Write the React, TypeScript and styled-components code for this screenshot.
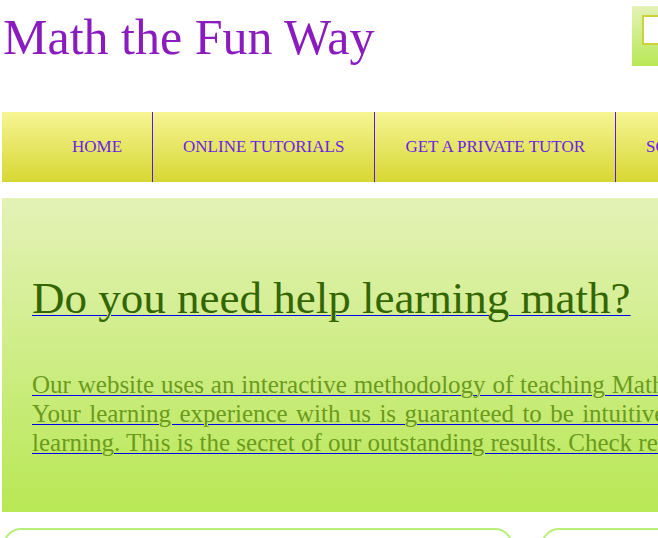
import React from "react";
import styled, { createGlobalStyle } from "styled-components";

const Global = createGlobalStyle`
  html, body {
    margin: 0;
    padding: 0;
    overflow: hidden;
    background: #ffffff;
  }
  body {
    font-family: "Liberation Serif", "Times New Roman", serif;
  }
`;

const Viewport = styled.div`
  width: 100%;
  overflow: hidden;
`;

const Page = styled.div`
  width: 951px;
  padding-left: 2px;
`;

const Header = styled.header`
  display: flex;
  justify-content: space-between;
  align-items: flex-start;
  height: 112px;
`;

const Title = styled.h1`
  margin: 8px 0 0 1px;
  font-size: 50px;
  font-weight: normal;
  line-height: normal;
  color: #8a1cbf;
`;

const SearchPanel = styled.div`
  margin-top: 6px;
  width: 321px;
  height: 60px;
  box-sizing: border-box;
  padding: 9px 10px;
  background: linear-gradient(to bottom, #e4f2b6, #b8e856);
`;

const SearchInput = styled.input`
  display: block;
  width: 200px;
  height: 30px;
  box-sizing: border-box;
  border: 2px solid #cdd23a;
  background: #ffffff;
  outline: none;
`;

const Nav = styled.nav`
  height: 70px;
  background: linear-gradient(to bottom, #f6f594, #d7d733);
`;

const NavList = styled.ul`
  display: flex;
  height: 100%;
  margin: 0;
  padding: 0 0 0 40px;
  list-style: none;
  white-space: nowrap;
`;

const NavItem = styled.li`
  display: flex;
  align-items: center;
  padding: 0 30px;
  border-right: 1px solid #5a14ee;
  font-size: 17px;
  color: #6a22e6;
  text-transform: uppercase;
`;

const Hero = styled.section`
  margin-top: 16px;
  padding: 74px 30px 55px;
  background: linear-gradient(to bottom, #e4f2b7, #b8e855);
`;

const HeroLink = styled.a`
  color: #0000ee;
  text-decoration: underline;
  text-decoration-thickness: 1px;
  text-underline-offset: 2px;
`;

const Heading = styled.h2`
  margin: 0 0 47px;
  font-size: 45px;
  font-weight: normal;
  line-height: normal;
`;

const HeadingText = styled.span`
  color: #336600;
`;

const Lead = styled.p`
  margin: 0;
  font-size: 25px;
  line-height: 28.75px;
  text-align: justify;
`;

const LeadText = styled.span`
  color: #6b9a1c;
`;

const Cards = styled.div`
  display: flex;
  gap: 28px;
  margin-top: 16px;
  padding-left: 1px;
`;

const Card = styled.div<{ $w: number }>`
  width: ${(p) => p.$w}px;
  height: 120px;
  box-sizing: border-box;
  border: 2px solid #b9f07c;
  border-radius: 18px;
  flex-shrink: 0;
`;

const navItems = ["Home", "Online Tutorials", "Get a Private Tutor", "Solved Problems"];

export default function App() {
  return (
    <Viewport>
      <Global />
      <Page>
        <Header>
          <Title>Math the Fun Way</Title>
          <SearchPanel>
            <SearchInput type="text" aria-label="Search" />
          </SearchPanel>
        </Header>
        <Nav>
          <NavList>
            {navItems.map((n) => (
              <NavItem key={n}>{n}</NavItem>
            ))}
          </NavList>
        </Nav>
        <Hero>
          <Heading>
            <HeroLink href="#">
              <HeadingText>Do you need help learning math?</HeadingText>
            </HeroLink>
          </Heading>
          <Lead>
            <HeroLink href="#">
              <LeadText>
                Our website uses an interactive methodology of teaching Mathematics that makes it fun.
                Your learning experience with us is guaranteed to be intuitive and enjoyable, for faster
                learning. This is the secret of our outstanding results. Check reviews from our students.
              </LeadText>
            </HeroLink>
          </Lead>
        </Hero>
        <Cards>
          <Card $w={510} />
          <Card $w={410} />
        </Cards>
      </Page>
    </Viewport>
  );
}
